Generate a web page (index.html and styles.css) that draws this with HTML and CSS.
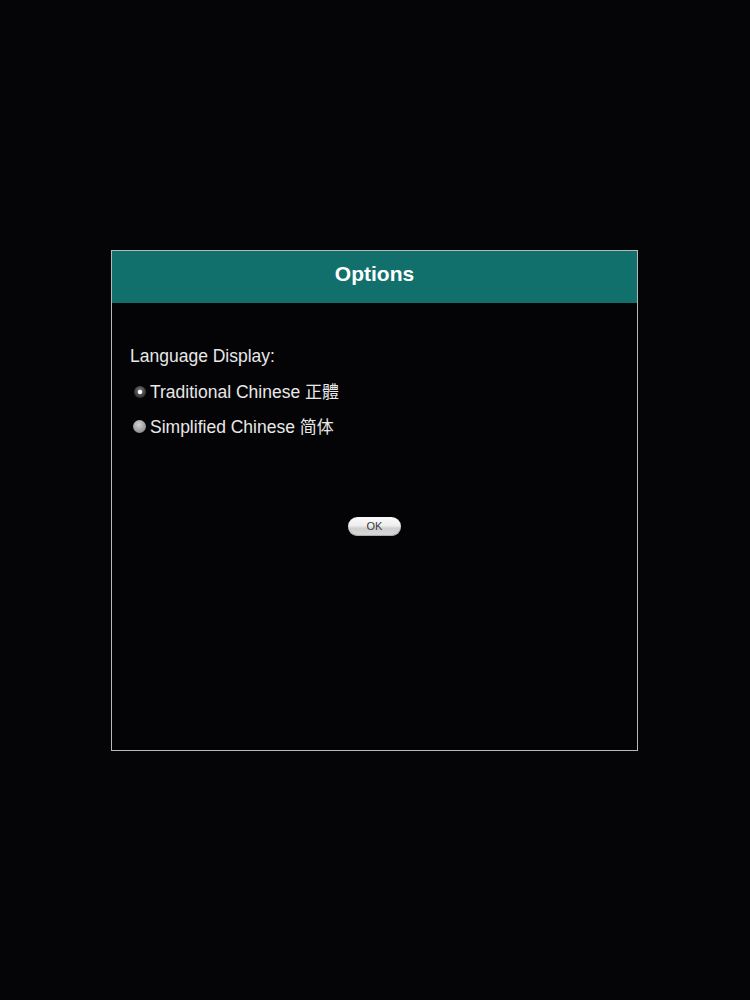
FILE: index.html
```html
<!DOCTYPE html>
<html lang="en">
<head>
<meta charset="utf-8">
<title>Options</title>
<link rel="stylesheet" href="styles.css">
</head>
<body>
<div class="screen">
  <div class="dialog">
    <div class="dialog-header">Options</div>
    <div class="dialog-body">
      <div class="label">Language Display:</div>
      <div class="option">
        <span class="radio radio-on"><span class="dot"></span></span>
        <span class="option-text">Traditional Chinese <span lang="zh-Hant" class="tc">正體</span></span>
      </div>
      <div class="option">
        <span class="radio radio-off"></span>
        <span class="option-text">Simplified Chinese <span lang="zh-Hans" class="sc">简体</span></span>
      </div>
      <div class="actions">
        <button class="ok-btn">OK</button>
      </div>
    </div>
  </div>
</div>
</body>
</html>
```

FILE: styles.css
```css
html, body {
  margin: 0;
  padding: 0;
  background: #050508;
}

.screen {
  width: 750px;
  height: 1000px;
  display: flex;
  flex-direction: column;
  padding-top: 250px;
  padding-left: 111px;
  box-sizing: border-box;
}

.dialog {
  width: 527px;
  height: 501px;
  box-sizing: border-box;
  border: 1px solid #b9b9bc;
  background: #040406;
  display: flex;
  flex-direction: column;
}

.dialog-header {
  height: 52px;
  background: #12706c;
  color: #ffffff;
  font-family: "Liberation Sans", Arial, sans-serif;
  font-weight: bold;
  font-size: 21px;
  line-height: 46px;
  text-align: center;
  flex-shrink: 0;
}

.dialog-body {
  padding: 36px 0 0 18px;
  display: flex;
  flex-direction: column;
  color: #e8e8e8;
  font-family: "Liberation Sans", Arial, "Noto Sans CJK TC", sans-serif;
  font-size: 17.5px;
  line-height: 35px;
}

.label {
  height: 35px;
}

.option {
  display: flex;
  align-items: center;
  height: 35px;
}

.radio {
  width: 20px;
  height: 35px;
  display: flex;
  align-items: center;
  justify-content: center;
  position: relative;
}

.radio-on::before {
  content: "";
  width: 12px;
  height: 12px;
  border-radius: 50%;
  background: radial-gradient(circle at 50% 40%, #8a8a8a 0%, #4a4a4a 45%, #1a1a1a 100%);
}

.radio-on .dot {
  position: absolute;
  left: 8px;
  top: 15.5px;
  width: 4px;
  height: 4px;
  border-radius: 50%;
  background: #ffffff;
  box-shadow: 0 0 1px #ffffff;
}

.radio-off::before {
  content: "";
  width: 13px;
  height: 13px;
  border-radius: 50%;
  margin-left: -1px;
  background: radial-gradient(circle at 45% 35%, #d2d2d2 0%, #a6a6a6 50%, #6d6d6d 100%);
}

.option-text {
  white-space: nowrap;
}

.tc {
  font-family: "Noto Sans CJK TC", sans-serif;
  font-size: 17px;
}

.sc {
  font-family: "Noto Sans CJK SC", sans-serif;
  font-size: 17px;
}

.actions {
  display: flex;
  justify-content: center;
  margin-top: 73px;
  padding-right: 18px;
}

.ok-btn {
  width: 53px;
  height: 19px;
  padding: 0;
  border: none;
  border-radius: 10px;
  background: linear-gradient(to bottom, #fbfbfb 0%, #eeeeee 45%, #cfcfcf 60%, #d9d9d9 100%);
  box-shadow: inset 0 -1px 1px #a8a8a8;
  color: #3a3a3a;
  font-family: "Liberation Sans", Arial, sans-serif;
  font-size: 11px;
  line-height: 19px;
  text-align: center;
}
```
